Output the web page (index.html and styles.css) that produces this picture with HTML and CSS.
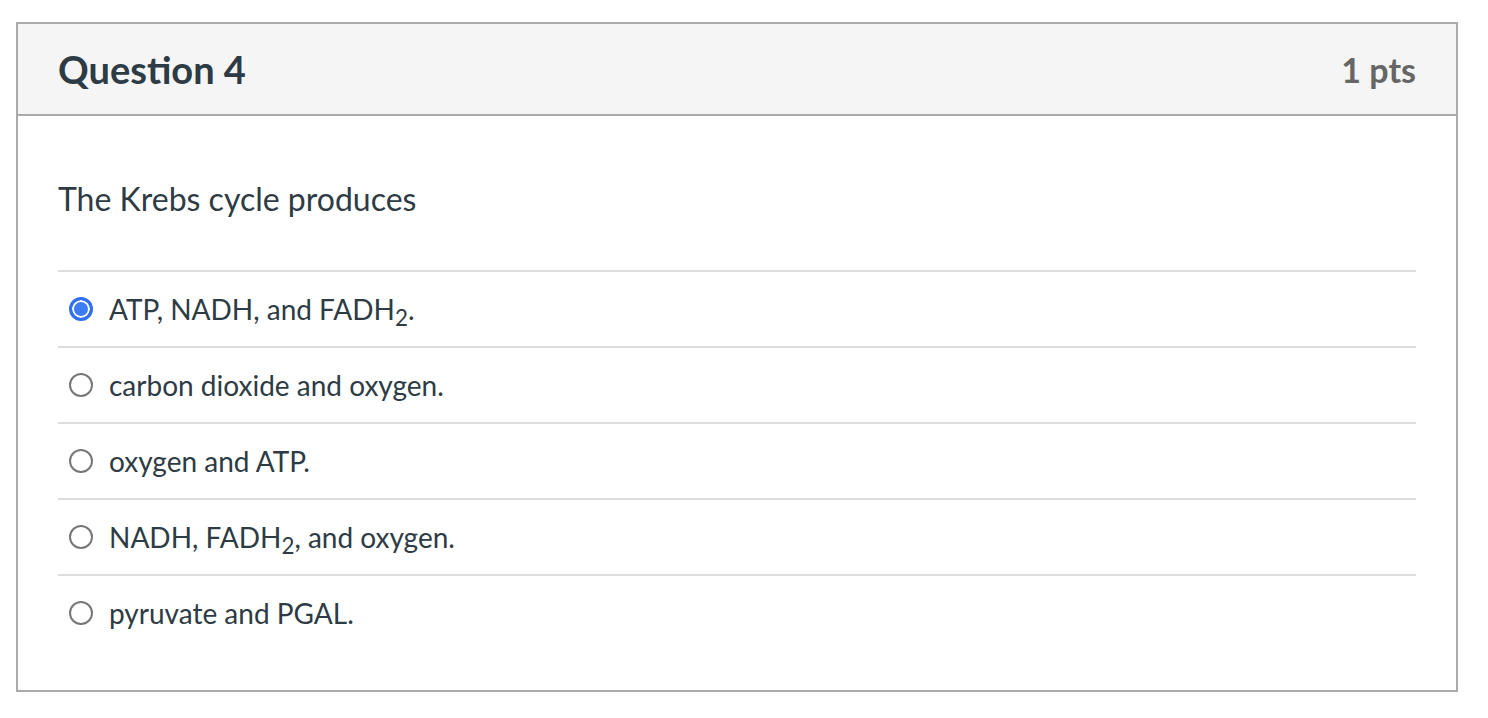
FILE: index.html
```html
<!DOCTYPE html>
<html lang="en">
<head>
<meta charset="utf-8">
<title>Question 4</title>
<link rel="stylesheet" href="styles.css">
</head>
<body>
<div class="page">
  <section class="question">
    <header class="question-header">
      <h2 class="question-title">Question 4</h2>
      <span class="question-points">1 pts</span>
    </header>
    <div class="question-body">
      <p class="question-text">The Krebs cycle produces</p>
      <ul class="answers">
        <li class="answer">
          <span class="radio checked"></span>
          <span class="answer-label">ATP, NADH, and FADH<sub>2</sub>.</span>
        </li>
        <li class="answer">
          <span class="radio"></span>
          <span class="answer-label">carbon dioxide and oxygen.</span>
        </li>
        <li class="answer">
          <span class="radio"></span>
          <span class="answer-label">oxygen and ATP.</span>
        </li>
        <li class="answer">
          <span class="radio"></span>
          <span class="answer-label">NADH, FADH<sub>2</sub>, and oxygen.</span>
        </li>
        <li class="answer">
          <span class="radio"></span>
          <span class="answer-label">pyruvate and PGAL.</span>
        </li>
      </ul>
    </div>
  </section>
</div>
</body>
</html>
```
FILE: styles.css
```css
* { box-sizing: border-box; }

html, body {
  margin: 0;
  padding: 0;
  background: #ffffff;
}

body {
  font-family: Lato, "Open Sans", sans-serif;
  color: #2d3b45;
}

.page {
  padding: 22px 30px 0 16px;
}

.question {
  width: 1442px;
  border: 2px solid #aaaaaa;
  background: #ffffff;
}

.question-header {
  display: flex;
  align-items: center;
  justify-content: space-between;
  height: 92px;
  padding: 0 40px 0 40px;
  background: #f5f5f5;
  border-bottom: 2px solid #aaaaaa;
}

.question-title {
  margin: 0;
  font-size: 38px;
  font-weight: 700;
  color: #2d3b45;
}

.question-points {
  font-size: 34px;
  font-weight: 700;
  color: #666666;
}

.question-body {
  padding: 60px 40px 40px 40px;
}

.question-text {
  margin: 0 0 48px 0;
  font-size: 32px;
  line-height: 46px;
}

.answers {
  list-style: none;
  margin: 0;
  padding: 0;
}

.answer {
  display: flex;
  align-items: center;
  gap: 16px;
  height: 76px;
  padding-left: 11px;
  border-top: 2px solid #dddddd;
  font-size: 28px;
}

.radio {
  flex: none;
  width: 24px;
  height: 24px;
  border-radius: 50%;
  border: 2px solid #777777;
  background: #ffffff;
}

.radio.checked {
  border: 3px solid #2f6ff0;
  box-shadow: inset 0 0 0 2px #ffffff;
  background: #3d7cf2;
}

.answer-label sub {
  font-size: 0.8em;
  line-height: 0;
  vertical-align: -0.25em;
}
```
